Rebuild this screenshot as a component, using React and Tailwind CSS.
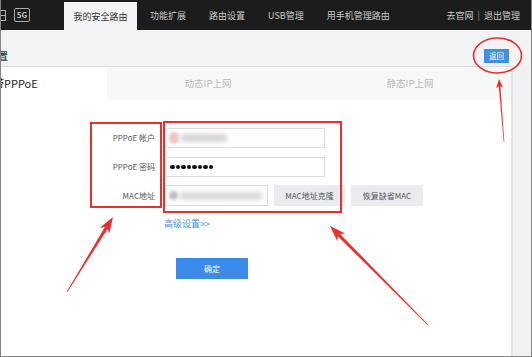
import React from "react";

function arrowPoints(tx, ty, hx, hy, w0, w1, L, W) {
  const dx = hx - tx, dy = hy - ty;
  const len = Math.hypot(dx, dy);
  const ux = dx / len, uy = dy / len;
  const px = -uy, py = ux;
  const nx = hx - ux * L, ny = hy - uy * L;
  const bx = hx - ux * (L * 0.8), by = hy - uy * (L * 0.8);
  const pts = [
    [tx + (px * w0) / 2, ty + (py * w0) / 2],
    [bx + (px * w1) / 2, by + (py * w1) / 2],
    [nx + (px * W) / 2, ny + (py * W) / 2],
    [hx, hy],
    [nx - (px * W) / 2, ny - (py * W) / 2],
    [bx - (px * w1) / 2, by - (py * w1) / 2],
    [tx - (px * w0) / 2, ty - (py * w0) / 2],
  ];
  return pts.map((p) => p.map((v) => v.toFixed(1)).join(",")).join(" ");
}

function Annotations() {
  const red = "#e8302c";
  return (
    <svg
      className="absolute top-0 left-0 pointer-events-none"
      width="532"
      height="357"
      viewBox="0 0 532 357"
    >
      <rect x="91" y="123" width="70" height="84" fill="none" stroke={red} strokeWidth="2" />
      <rect x="164" y="122" width="177" height="90" fill="none" stroke={red} strokeWidth="2" />
      <ellipse cx="497.5" cy="55.5" rx="24" ry="17.5" fill="none" stroke={red} strokeWidth="1.6" />
      <polygon points={arrowPoints(504, 142, 499, 79, 0.6, 1.6, 9, 7)} fill={red} />
      <polygon points={arrowPoints(67, 292, 113, 217, 0.8, 3.2, 16, 11)} fill={red} />
      <polygon points={arrowPoints(428, 325, 330, 226, 0.8, 3.2, 16, 11)} fill={red} />
    </svg>
  );
}

export default function App() {
  return (
    <div
      className="relative w-[532px] h-[357px] overflow-hidden"
      style={{ fontFamily: "'Noto Sans CJK SC', 'Noto Sans', sans-serif" }}
    >
      <div className="w-[532px] h-[357px] flex flex-col bg-[#f2f3f5] border-x border-b border-[#858585] overflow-hidden">
        {/* top bar */}
        <header className="h-[30px] shrink-0 bg-[#1c1c1c] flex items-stretch text-[9px] leading-none text-[#c9c9c9]">
          <div className="w-[63px] flex items-center">
            <div className="ml-[-6px] w-[11px] h-[11px] border border-[#b5b5b5] flex flex-col justify-center">
              <div className="h-[1px] bg-[#b5b5b5]" />
            </div>
            <div className="ml-[8px] w-[16px] h-[14px] border border-[#a8a8a8] rounded-[2px] flex items-center justify-center text-[8px] font-bold text-[#c4c4c4]">
              5G
            </div>
          </div>
          <div className="w-[73px] mt-[2px] bg-[#f2f3f5] text-[#333] flex items-center justify-center">
            我的安全路由
          </div>
          <nav className="flex items-center gap-[23px] pl-[13px]">
            <span>功能扩展</span>
            <span>路由设置</span>
            <span>USB管理</span>
            <span>用手机管理路由</span>
          </nav>
          <div className="ml-auto pr-[11px] flex items-center gap-[4px]">
            <span>去官网</span>
            <span className="text-[#888]">|</span>
            <span>退出管理</span>
          </div>
        </header>

        {/* sub header */}
        <div className="h-[36px] shrink-0 flex items-center pt-[16px] overflow-hidden">
          <span className="ml-[-13px] text-[10px] leading-none text-[#333] font-medium whitespace-nowrap">设置</span>
          <button className="ml-auto mr-[22px] w-[25px] h-[14px] bg-[#3d8fe8] text-white text-[7.5px] leading-none flex items-center justify-center">
            返回
          </button>
        </div>

        {/* main */}
        <div className="flex-1 flex min-h-0">
          <div className="w-[510px] bg-white border-t border-[#dcdcdc] flex flex-col">
            {/* tabs */}
            <div className="h-[33px] shrink-0 flex">
              <div className="w-[106px] bg-white flex items-center overflow-hidden">
                <span className="ml-[-8px] text-[11px] leading-none text-[#222] whitespace-nowrap">带PPPoE</span>
              </div>
              <div className="flex-1 bg-[#f8f8f8] flex items-center justify-center text-[9.5px] leading-none text-[#b8b8b8]">
                动态IP上网
              </div>
              <div className="flex-1 bg-[#f8f8f8] flex items-center justify-center text-[9.5px] leading-none text-[#b8b8b8]">
                静态IP上网
              </div>
            </div>

            {/* form */}
            <div className="mt-[28px] flex flex-col">
              <div className="flex h-[20px]">
                <div className="w-[154px] flex items-center justify-end text-[8px] leading-none text-[#555]">PPPoE 帐户</div>
                <div className="ml-[10px] w-[160px] border border-[#dcdcdc] flex items-center pl-[3px] gap-[2px] overflow-hidden">
                  <div className="w-[10px] h-[12px] rounded-full bg-[#f0c4c4] blur-[1.5px]" />
                  <div className="w-[46px] h-[8px] bg-[#d6d6d6] blur-[2px]" />
                </div>
              </div>
              <div className="flex h-[20px] mt-[9px]">
                <div className="w-[154px] flex items-center justify-end text-[8px] leading-none text-[#555]">PPPoE 密码</div>
                <div className="ml-[10px] w-[160px] border border-[#dcdcdc] flex items-center pl-[4px] gap-[1px]">
                  {[0, 1, 2, 3, 4, 5, 6, 7].map((i) => (
                    <span key={i} className="w-[4.5px] h-[4.5px] rounded-full bg-[#111]" />
                  ))}
                </div>
              </div>
              <div className="flex h-[21px] mt-[8px]">
                <div className="w-[154px] flex items-center justify-end text-[8px] leading-none text-[#555]">MAC地址</div>
                <div className="ml-[10px] w-[103px] border border-[#dcdcdc] flex items-center pl-[3px] gap-[2px] overflow-hidden">
                  <div className="w-[9px] h-[9px] rounded-full bg-[#bdbdbd] blur-[1.5px]" />
                  <div className="w-[82px] h-[8px] bg-[#dadada] blur-[2px]" />
                </div>
                <button className="ml-[6px] w-[71px] bg-[#e9ebef] text-[8px] leading-none text-[#555] flex items-center justify-center">
                  MAC地址克隆
                </button>
                <button className="ml-[6px] w-[72px] bg-[#e9ebef] text-[8px] leading-none text-[#555] flex items-center justify-center">
                  恢复缺省MAC
                </button>
              </div>
              <div className="pl-[163px] mt-[13px] text-[9px] leading-none text-[#4a93d6]">高级设置&gt;&gt;</div>
              <div className="pl-[175px] mt-[30px]">
                <button className="w-[72px] h-[21px] bg-[#3b8beb] text-white text-[8px] leading-none flex items-center justify-center">
                  确定
                </button>
              </div>
            </div>
          </div>
          <div className="flex-1 bg-[#f0f1f3] border-l-2 border-[#e2e3e5]" />
        </div>
      </div>
      <Annotations />
    </div>
  );
}
